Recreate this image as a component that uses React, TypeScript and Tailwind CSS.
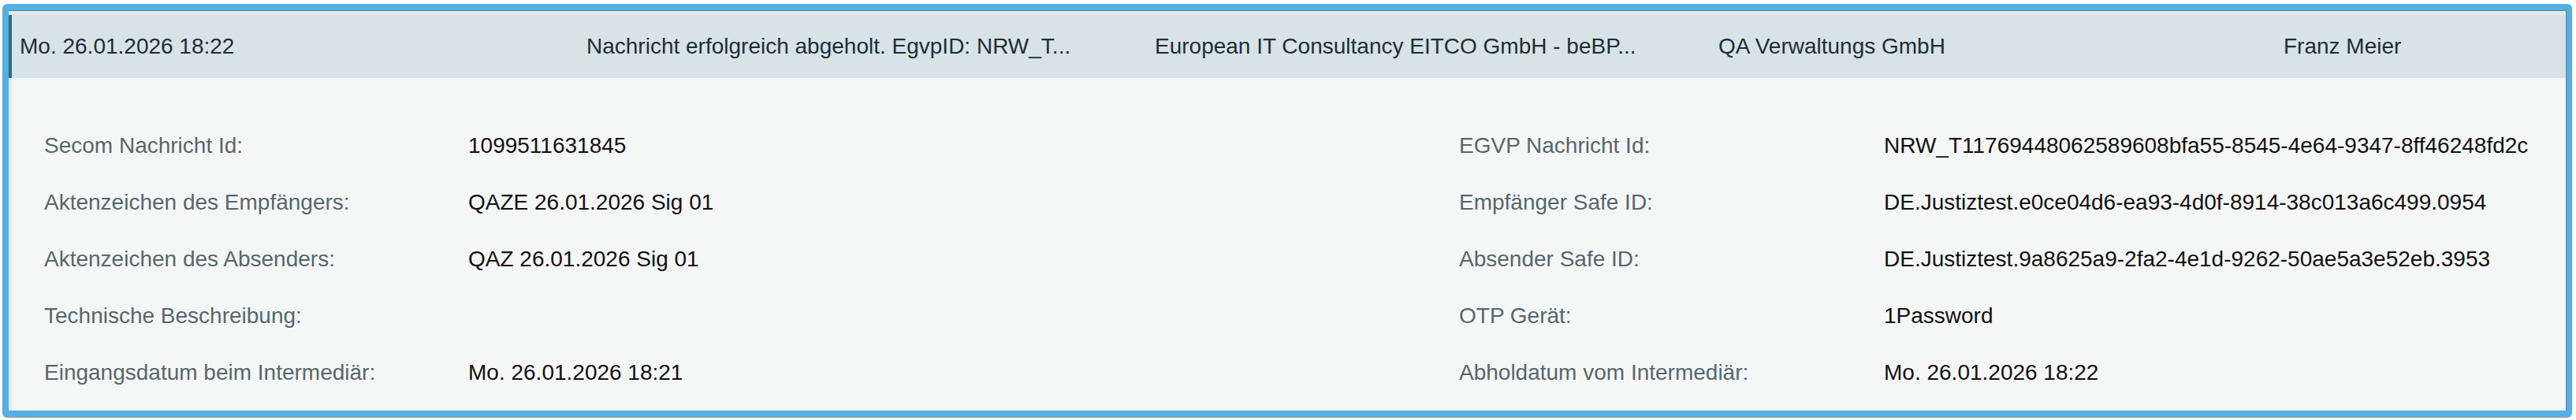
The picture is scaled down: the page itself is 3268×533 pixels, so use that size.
const header = [
  { text: 'Mo. 26.01.2026 18:22', w: 'w-[719px]' },
  { text: 'Nachricht erfolgreich abgeholt. EgvpID: NRW_T...', w: 'w-[721px]' },
  { text: 'European IT Consultancy EITCO GmbH - beBP...', w: 'w-[715px]' },
  { text: 'QA Verwaltungs GmbH', w: 'w-[717px]' },
  { text: 'Franz Meier', w: 'flex-1' },
];

const rows: [string, string, string, string][] = [
  ['Secom Nachricht Id:', '1099511631845', 'EGVP Nachricht Id:', 'NRW_T11769448062589608bfa55-8545-4e64-9347-8ff46248fd2c'],
  ['Aktenzeichen des Empfängers:', 'QAZE 26.01.2026 Sig 01', 'Empfänger Safe ID:', 'DE.Justiztest.e0ce04d6-ea93-4d0f-8914-38c013a6c499.0954'],
  ['Aktenzeichen des Absenders:', 'QAZ 26.01.2026 Sig 01', 'Absender Safe ID:', 'DE.Justiztest.9a8625a9-2fa2-4e1d-9262-50ae5a3e52eb.3953'],
  ['Technische Beschreibung:', '', 'OTP Gerät:', '1Password'],
  ['Eingangsdatum beim Intermediär:', 'Mo. 26.01.2026 18:21', 'Abholdatum vom Intermediär:', 'Mo. 26.01.2026 18:22'],
];

export default function App() {
  return (
    <div className="w-[3268px] h-[533px] bg-white pt-[5px] pl-[3px] font-['Liberation_Sans',Arial,sans-serif] text-[28px]">
      {/* focused message row */}
      <div className="w-[3260px] h-[524px] rounded-[6px] bg-[#52b0e6] p-[8px] pr-[7px] shadow-[0_1px_1px_rgba(0,0,0,0.45)]">
        <div className="h-[508px] flex flex-col bg-[#f5f7f7] border-t border-r border-[#6f7d83]">
          <div className="h-[5px] bg-[#e3e9ec]" />
          <div className="h-[80px] flex items-center bg-[#d8e3e8] border-l-4 border-[#2f6a7c] pl-[10px] text-[#1e2e34]">
            {header.map((h) => (
              <div key={h.text} className={`${h.w} whitespace-nowrap`}>
                {h.text}
              </div>
            ))}
          </div>
          <div className="flex-1 border-l-4 border-[#e6ecef] pl-[41px] pt-[50px]">
            {rows.map(([l1, v1, l2, v2]) => (
              <div key={l1} className="h-[72px] grid grid-cols-[538px_1257px_539px_1fr] items-center whitespace-nowrap">
                <div className="text-[#56676d]">{l1}</div>
                <div className="text-[#111111]">{v1}</div>
                <div className="text-[#56676d]">{l2}</div>
                <div className="text-[#111111]">{v2}</div>
              </div>
            ))}
          </div>
        </div>
      </div>
    </div>
  );
}
